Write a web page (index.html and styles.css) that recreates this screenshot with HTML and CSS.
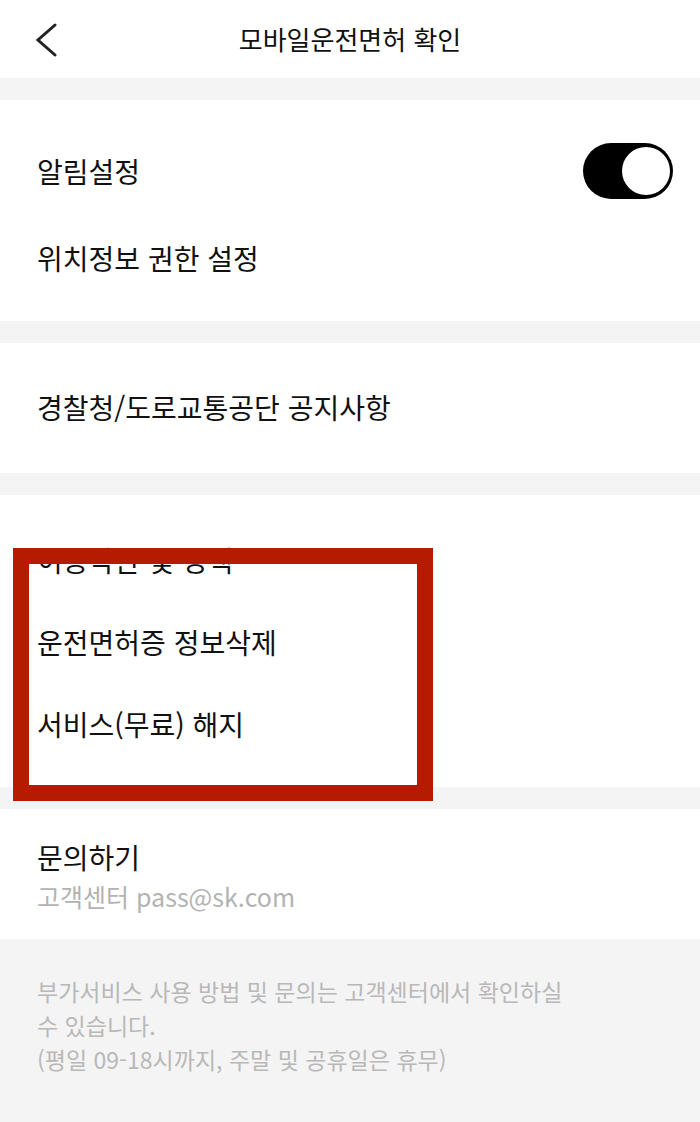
FILE: index.html
```html
<!DOCTYPE html>
<html lang="ko">
<head>
<meta charset="utf-8">
<title>모바일운전면허 확인</title>
<link rel="stylesheet" href="styles.css">
</head>
<body>
<div class="page">
  <header class="header">
    <div class="back">
      <svg width="24" height="36" viewBox="0 0 24 36" aria-hidden="true">
        <polyline points="19,3 2,18 19,33" fill="none" stroke="#222" stroke-width="3" stroke-linecap="round" stroke-linejoin="miter"/>
      </svg>
    </div>
    <h1 class="title">모바일운전면허 확인</h1>
    <div></div>
  </header>

  <section class="card card-settings">
    <div class="row row-toggle">
      <span class="label">알림설정</span>
      <span class="toggle"><span class="knob"></span></span>
    </div>
    <div class="row"><span class="label">위치정보 권한 설정</span></div>
  </section>

  <section class="card card-notice">
    <div class="row"><span class="label">경찰청/도로교통공단 공지사항</span></div>
  </section>

  <section class="card card-terms">
    <div class="row"><span class="label">이용약관 및 정책</span></div>
    <div class="row"><span class="label">운전면허증 정보삭제</span></div>
    <div class="row"><span class="label">서비스(무료) 해지</span></div>
    <div class="highlight"></div>
  </section>

  <section class="card card-contact">
    <div class="contact-title">문의하기</div>
    <div class="contact-sub">고객센터 pass@sk.com</div>
  </section>

  <footer class="footer">
    <p>부가서비스 사용 방법 및 문의는 고객센터에서 확인하실<br>수 있습니다.<br>(평일 09-18시까지, 주말 및 공휴일은 휴무)</p>
  </footer>
</div>
</body>
</html>
```

FILE: styles.css
```css
* { box-sizing: border-box; }

html, body {
  margin: 0;
  padding: 0;
  background: #f4f4f4;
}

body {
  font-family: "Noto Sans CJK KR", "Noto Sans", sans-serif;
  color: #111;
}

.page {
  display: flex;
  flex-direction: column;
  gap: 22px;
  min-height: 1122px;
}

.header {
  height: 78px;
  background: #fff;
  display: grid;
  grid-template-columns: 1fr auto 1fr;
  align-items: center;
}

.back {
  padding-left: 36px;
  display: flex;
  align-items: center;
  padding-top: 2px;
}

.title {
  margin: 0;
  font-size: 26px;
  font-weight: 400;
  color: #111;
  line-height: 1;
}

.card {
  background: #fff;
  display: flex;
  flex-direction: column;
}

.row {
  height: 82px;
  display: flex;
  align-items: center;
  justify-content: space-between;
  padding: 0 27px 0 37px;
}

.label {
  font-size: 28px;
  line-height: 1;
  color: #111;
  padding-bottom: 3px;
}

.card-settings { padding: 24px 0 21px; }
.card-settings .row-toggle { height: 94px; }
.card-settings .row-toggle .label { padding-bottom: 0; }

.toggle {
  width: 90px;
  height: 56px;
  border-radius: 28px;
  background: #000;
  display: flex;
  align-items: center;
  justify-content: flex-end;
  padding-right: 3px;
}

.knob {
  width: 48px;
  height: 48px;
  border-radius: 50%;
  background: #fff;
}

.card-notice { padding: 24px 0; }

.card-terms {
  padding: 24px 0 22px;
  position: relative;
}

.card-terms .label { padding-bottom: 0; }

.highlight {
  position: absolute;
  left: 13px;
  top: 53px;
  width: 420px;
  height: 253px;
  border: 16px solid #b41b00;
}

.card-contact {
  padding: 30px 37px 27px;
}

.contact-title {
  font-size: 28px;
  line-height: 36px;
  color: #111;
}

.contact-sub {
  margin-top: 5px;
  font-size: 25px;
  line-height: 32px;
  color: #b3b3b3;
}

.footer {
  flex: 1;
  padding: 13px 37px 20px;
}

.footer p {
  margin: 0;
  font-size: 23px;
  line-height: 34px;
  color: #b8b8b8;
}
```
